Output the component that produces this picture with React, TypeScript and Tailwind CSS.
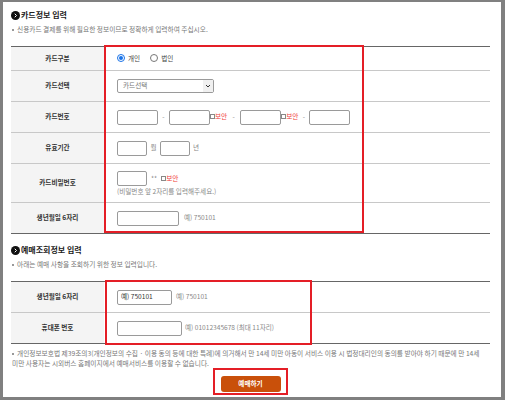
const Row = ({ label, h, last, children }: { label: string; h: string; last?: boolean; children: React.ReactNode }) => (
    <div className={`flex ${h} ${last ? '' : 'border-b border-[#c8c8c8]'}`}>
        <div className="flex w-[93px] shrink-0 items-center justify-center bg-[#f4f4f4] text-[6.6px] font-bold text-[#333]">{label}</div>
        <div className="flex flex-1 flex-col justify-center pl-[13px]">{children}</div>
    </div>
);

const Box = ({ w, value }: { w: string; value?: string }) => (
    <span className={`flex h-[15px] ${w} items-center rounded-[2px] border border-[#9a9a9a] bg-white pl-[3px] text-[6.6px] text-[#333]`}>{value}</span>
);

const Check = () => <span className="inline-block h-[5px] w-[5px] border border-[#888] bg-white"></span>;

const Secure = () => (
    <span className="flex items-center">
        <Check />
        <span className="text-[6.6px] text-[#f03c3c]">보안</span>
    </span>
);

const Heading = ({ text }: { text: string }) => (
    <div className="flex h-[12px] items-center">
        <span className="flex h-[9px] w-[9px] items-center justify-center rounded-full bg-[#111]">
            <svg width="5" height="5" viewBox="0 0 10 10">
                <path d="M3.5 1.5 L7 5 L3.5 8.5" stroke="#fff" strokeWidth="2" fill="none" />
            </svg>
        </span>
        <span className="pl-[1px] text-[8px] font-bold text-[#222]">{text}</span>
    </div>
);

const Bullet = () => <span className="mr-[3px] inline-block h-[2px] w-[2px] bg-[#999] align-middle"></span>;

const Note = ({ children }: { children: React.ReactNode }) => (
    <div className="mt-[3px] h-[10px] pl-[1px] text-[6.7px] leading-[10px] text-[#777]">
        <Bullet />
        {children}
    </div>
);

const App = () => {
    return (
        <div className="relative h-[400px] w-[505px] overflow-hidden border-b-[3px] border-l-[3px] border-r-4 border-t-2 border-[#808080] bg-white font-['Noto_Sans_CJK_KR',sans-serif]">
            <div className="pl-[8px] pr-[11px] pt-[7px]">
                <Heading text="카드정보 입력" />
                <Note>신용카드 결제를 위해 필요한 정보이므로 정확하게 입력하여 주십시오.</Note>

                <div className="mt-[12px] border-y border-[#666]">
                    <Row label="카드구분" h="h-[24px]">
                        <div className="flex items-center text-[6.6px] text-[#444]">
                            <span className="flex h-[8px] w-[8px] items-center justify-center rounded-full border border-[#1a73e8] bg-white">
                                <span className="h-[4px] w-[4px] rounded-full bg-[#1a73e8]"></span>
                            </span>
                            <span className="pl-[3px]">개인</span>
                            <span className="ml-[10px] h-[8px] w-[8px] rounded-full border border-[#777] bg-white"></span>
                            <span className="pl-[3px]">법인</span>
                        </div>
                    </Row>
                    <Row label="카드선택" h="h-[31px]">
                        <div className="flex h-[14px] w-[97px] items-center justify-between rounded-[2px] border border-[#9a9a9a] bg-white pl-[5px] text-[6.6px] text-[#777]">
                            <span>카드선택</span>
                            <span className="flex h-full w-[10px] items-center justify-center bg-[#f0f0f0]">
                                <svg width="6" height="4" viewBox="0 0 6 4">
                                    <path d="M1 1 L3 3 L5 1" stroke="#333" strokeWidth="1" fill="none" />
                                </svg>
                            </span>
                        </div>
                    </Row>
                    <Row label="카드번호" h="h-[31px]">
                        <div className="flex items-center text-[6.6px] text-[#888]">
                            <Box w="w-[41px]" />
                            <span className="w-[11px] text-center">-</span>
                            <Box w="w-[41px]" />
                            <Secure />
                            <span className="w-[13px] text-center">-</span>
                            <Box w="w-[41px]" />
                            <Secure />
                            <span className="w-[11px] text-center">-</span>
                            <Box w="w-[41px]" />
                        </div>
                    </Row>
                    <Row label="유효기간" h="h-[31px]">
                        <div className="flex items-center text-[6.6px] text-[#888]">
                            <Box w="w-[30px]" />
                            <span className="w-[13px] text-center">월</span>
                            <Box w="w-[30px]" />
                            <span className="pl-[3px]">년</span>
                        </div>
                    </Row>
                    <Row label="카드비밀번호" h="h-[39px]">
                        <div className="flex items-center text-[6.6px] text-[#888]">
                            <Box w="w-[30px]" />
                            <span className="px-[4px]">**</span>
                            <Secure />
                        </div>
                        <div className="mt-[1px] text-[6.6px] leading-[8px] text-[#888]">(비밀번호 앞 2자리를 입력해주세요.)</div>
                    </Row>
                    <Row label="생년월일 6자리" h="h-[30px]" last>
                        <div className="flex items-center text-[6.6px] text-[#888]">
                            <Box w="w-[62px]" />
                            <span className="pl-[5px]">예) 750101</span>
                        </div>
                    </Row>
                </div>

                <div className="mt-[10px]">
                    <Heading text="예매조회정보 입력" />
                </div>
                <Note>아래는 예매 사항을 조회하기 위한 정보 입력입니다.</Note>

                <div className="mt-[12px] border-y border-[#666]">
                    <Row label="생년월일 6자리" h="h-[31px]">
                        <div className="flex items-center text-[6.6px] text-[#888]">
                            <Box w="w-[55px]" value="예) 750101" />
                            <span className="pl-[4px]">예) 750101</span>
                        </div>
                    </Row>
                    <Row label="휴대폰 번호" h="h-[30px]" last>
                        <div className="flex items-center text-[6.6px] text-[#888]">
                            <Box w="w-[65px]" />
                            <span className="pl-[3px]">예) 01012345678 (최대 11자리)</span>
                        </div>
                    </Row>
                </div>

                <div className="mt-[4px] break-keep pl-[1px] text-[6.7px] leading-[10px] text-[#777]">
                    <Bullet />
                    개인정보보호법 제39조의3(개인정보의 수집 · 이용 동의 등에 대한 특례)에 의거해서 만 14세 미만 아동이 서비스 이용 시 법정대리인의 동의를 받아야 하기 때문에 만 14세 미만 사용자는 시외버스 홈페이지에서 예매서비스를 이용할 수 없습니다.
                </div>

                <div className="mt-[8px] flex justify-center">
                    <button className="flex h-[16px] w-[60px] items-center justify-center rounded-[3px] bg-[#c9500a] text-[6.6px] font-bold text-white">예매하기</button>
                </div>
            </div>

            <div className="pointer-events-none absolute left-[101px] top-[43px] h-[188px] w-[260px] border-2 border-[#e41e26]"></div>
            <div className="pointer-events-none absolute left-[102px] top-[278px] h-[65px] w-[207px] border-2 border-[#e41e26]"></div>
            <div className="pointer-events-none absolute left-[210px] top-[366px] h-[27px] w-[75px] border-2 border-[#e41e26]"></div>
        </div>
    );
};

export default App;
